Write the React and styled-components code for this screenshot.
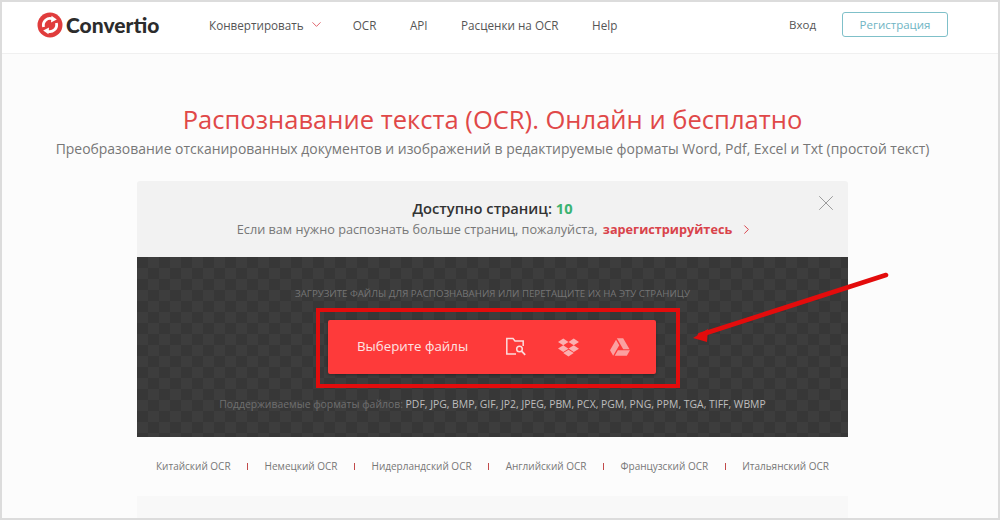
import React from 'react';
import styled, {createGlobalStyle} from 'styled-components';
import {ChevronDown, ChevronRight, X} from 'lucide-react';
import {FaDropbox, FaGoogleDrive} from 'react-icons/fa';

const GlobalStyle = createGlobalStyle`
  html, body {
    margin: 0;
    padding: 0;
    background: #fff;
  }
  * {
    box-sizing: border-box;
  }
`;

const links = ['Китайский OCR', 'Немецкий OCR', 'Нидерландский OCR', 'Английский OCR', 'Французский OCR', 'Итальянский OCR'];

const App = () => {
  return (
    <>
      <GlobalStyle />
      <Page>
        <Header>
          <Logo>
            <svg width="26" height="26" viewBox="0 0 26 26">
              <circle cx="13" cy="13" r="12.5" fill="#e03c3c" />
              <path d="M6.6 15A6.8 6.8 0 0 1 15.5 6.8" fill="none" stroke="#fff" strokeWidth="2.8" />
              <path d="M14.5 3.800L19.800 7.600L14 10.400Z" fill="#fff" />
              <path d="M19.4 11A6.8 6.8 0 0 1 10.5 19.2" fill="none" stroke="#fff" strokeWidth="2.8" />
              <path d="M11.5 22.200L6.200 18.400L12 15.600Z" fill="#fff" />
            </svg>
            <LogoText>Convertio</LogoText>
          </Logo>
          <Nav>
            <NavLink>
              Конвертировать <NavChevron size={15} color="#d9434b" strokeWidth={1.3} />
            </NavLink>
            <NavLink>OCR</NavLink>
            <NavLink>API</NavLink>
            <NavLink>Расценки на OCR</NavLink>
            <NavLink>Help</NavLink>
          </Nav>
          <Login>Вход</Login>
          <SignUp>Регистрация</SignUp>
        </Header>
        <Main>
          <Title>Распознавание текста (OCR). Онлайн и бесплатно</Title>
          <Subtitle>
            Преобразование отсканированных документов и изображений в редактируемые форматы Word, Pdf, Excel и Txt (простой текст)
          </Subtitle>
          <Panel>
            <Notice>
              <CloseButton>
                <X size={26} strokeWidth={0.9} color="#999" />
              </CloseButton>
              <NoticeTitle>
                Доступно страниц: <Count>10</Count>
              </NoticeTitle>
              <NoticeText>
                Если вам нужно распознать больше страниц, пожалуйста, <SignLink>зарегистрируйтесь</SignLink>
                <ChevronRight size={15} color="#d9434b" strokeWidth={1.6} />
              </NoticeText>
            </Notice>
            <Upload>
              <UploadHint>Загрузите файлы для распознавания или перетащите их на эту страницу</UploadHint>
              <Frame>
                <ChooseButton>
                  <ChooseLabel>Выберите файлы</ChooseLabel>
                  <IconRow>
                    <svg width="22" height="20" viewBox="0 0 22 20" fill="none" stroke="#fbdcdc" strokeWidth="1.5">
                      <path d="M11 17H1.800V1.500h6.200l2 2.500h8.200v5" />
                      <circle cx="14.500" cy="12" r="2.800" />
                      <path d="M16.600 14.200l3.600 3.600" strokeWidth="1.800" />
                    </svg>
                    <FaDropbox size={21} color="#fbb0b0" />
                    <FaGoogleDrive size={20} color="#fba0a0" />
                  </IconRow>
                </ChooseButton>
              </Frame>
              <Formats>
                Поддерживаемые форматы файлов: <FormatList>PDF, JPG, BMP, GIF, JP2, JPEG, PBM, PCX, PGM, PNG, PPM, TGA, TIFF, WBMP</FormatList>
              </Formats>
            </Upload>
            <Arrow width="210" height="76" viewBox="0 0 210 76">
              <path d="M206 4L20 64" stroke="#e30c0c" strokeWidth="4.600" strokeLinecap="round" />
              <path d="M13 67L28 58L27 71Z" fill="#e30c0c" />
            </Arrow>
          </Panel>
          <LinkRow>
            {links.map((link) => (
              <LangLink key={link}>{link}</LangLink>
            ))}
          </LinkRow>
          <BottomCard />
        </Main>
      </Page>
    </>
  );
};

const Page = styled.div`
  width: 1000px;
  height: 520px;
  overflow: hidden;
  border: 2px solid #dcdcdc;
  background: #fcfcfc;
  font-family: 'Open Sans', sans-serif;
`;

const Header = styled.header`
  display: flex;
  align-items: center;
  height: 52px;
  padding: 0 50px 6px 35px;
  background: #fff;
  border-bottom: 1px solid #f0f0f0;
`;

const Logo = styled.div`
  display: flex;
  align-items: center;
  gap: 3px;
  width: 172px;
`;

const LogoText = styled.span`
  font-family: 'Lato', sans-serif;
  font-size: 21px;
  font-weight: 900;
  color: #2c2c2c;
`;

const Nav = styled.nav`
  display: flex;
  align-items: center;
  gap: 33.5px;
  flex: 1;
`;

const NavLink = styled.span`
  display: flex;
  align-items: center;
  gap: 5px;
  font-size: 11.7px;
  color: #555;
`;

const NavChevron = styled(ChevronDown)`
  margin-right: -4.5px;
`;

const Login = styled.span`
  font-size: 11.5px;
  color: #555;
  margin-right: 26px;
`;

const SignUp = styled.span`
  display: flex;
  align-items: center;
  justify-content: center;
  width: 106px;
  height: 25px;
  border: 1px solid #7fc0c9;
  border-radius: 3px;
  font-size: 11.5px;
  color: #6fb5c4;
`;

const Main = styled.main`
  display: flex;
  flex-direction: column;
  align-items: center;
  padding-right: 15px;
`;

const Title = styled.h1`
  margin: 47px 0 0;
  font-size: 25.55px;
  line-height: 36px;
  font-weight: 400;
  color: #e04848;
`;

const Subtitle = styled.p`
  margin: 1px 0 0;
  font-size: 13.95px;
  line-height: 22px;
  color: #777;
  white-space: nowrap;
`;

const Panel = styled.section`
  position: relative;
  width: 711px;
  margin-top: 21px;
`;

const Notice = styled.div`
  position: relative;
  height: 76px;
  padding-top: 17px;
  background: #f2f2f2;
  border-radius: 3px 3px 0 0;
  text-align: center;
`;

const CloseButton = styled.span`
  position: absolute;
  top: 9px;
  right: 9px;
  display: flex;
`;

const NoticeTitle = styled.div`
  font-size: 14.7px;
  line-height: 20px;
  font-weight: 600;
  color: #333;
`;

const Count = styled.span`
  color: #3cb371;
  font-weight: 700;
`;

const NoticeText = styled.div`
  display: flex;
  align-items: center;
  justify-content: center;
  gap: 7px;
  padding-left: 6px;
  font-size: 12.7px;
  line-height: 22px;
  color: #777;
  white-space: pre-wrap;
`;

const SignLink = styled.span`
  margin-left: -5px;
  color: #d9434b;
  font-weight: 700;
`;

const Upload = styled.div`
  display: flex;
  flex-direction: column;
  align-items: center;
  height: 180px;
  padding-top: 31px;
  background-color: #373737;
  background-image: conic-gradient(#3d3d3d 25%, transparent 0 50%, #3d3d3d 0 75%, transparent 0);
  background-size: 22px 22px;
`;

const UploadHint = styled.div`
  font-size: 9.7px;
  line-height: 12px;
  text-transform: uppercase;
  color: #757575;
`;

const Frame = styled.div`
  margin-top: 8px;
  margin-left: 11px;
  padding: 8px 20px 10px 8px;
  border: 4px solid #e30c0c;
`;

const ChooseButton = styled.div`
  display: flex;
  align-items: center;
  width: 328px;
  height: 54px;
  padding: 0 26px 0 29px;
  background: #fe3a3a;
  border-radius: 2px;
  box-shadow: 0 1px 3px rgba(0, 0, 0, 0.3);
`;

const ChooseLabel = styled.span`
  flex: 1;
  padding-bottom: 2px;
  font-size: 13.3px;
  font-weight: 400;
  color: #fde3e3;
`;

const IconRow = styled.div`
  display: flex;
  align-items: center;
  gap: 31px;
`;

const Formats = styled.div`
  margin-top: 8px;
  font-size: 10.4px;
  line-height: 16px;
  color: #6f6f6f;
`;

const FormatList = styled.span`
  color: #bdbdbd;
`;

const Arrow = styled.svg`
  position: absolute;
  top: 90px;
  left: 543px;
`;

const LinkRow = styled.div`
  display: flex;
  justify-content: center;
  margin-top: 21px;
  font-size: 10px;
  line-height: 16px;
  color: #777;
`;

const LangLink = styled.span`
  &:not(:last-child)::after {
    content: '';
    display: inline-block;
    width: 1px;
    height: 7px;
    margin: 0 16.5px;
    background: #c24a4a;
  }
`;

const BottomCard = styled.div`
  width: 711px;
  height: 40px;
  margin-top: 22px;
  background: #f8f8f8;
`;

export default App;
